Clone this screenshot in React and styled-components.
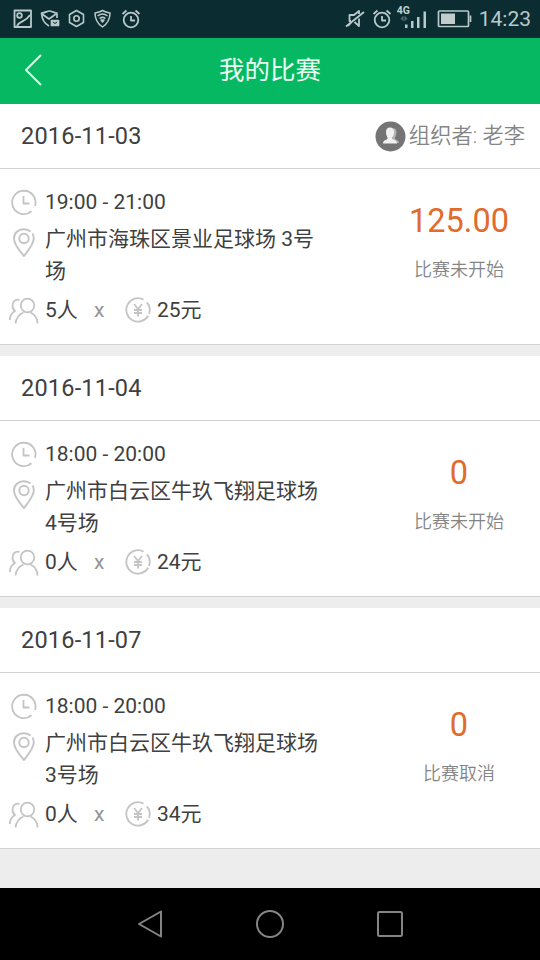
import React from 'react';
import styled, { createGlobalStyle } from 'styled-components';

const matches = [
  {
    date: '2016-11-03',
    organizer: '老李',
    time: '19:00 - 21:00',
    place: ['广州市海珠区景业足球场 3号', '场'],
    people: 5,
    price: 25,
    total: '125.00',
    status: '比赛未开始',
  },
  {
    date: '2016-11-04',
    time: '18:00 - 20:00',
    place: ['广州市白云区牛玖飞翔足球场', '4号场'],
    people: 0,
    price: 24,
    total: '0',
    status: '比赛未开始',
  },
  {
    date: '2016-11-07',
    time: '18:00 - 20:00',
    place: ['广州市白云区牛玖飞翔足球场', '3号场'],
    people: 0,
    price: 34,
    total: '0',
    status: '比赛取消',
  },
];

const App = () => (
  <>
    <GlobalStyle />
    <Screen>
      <StatusBar />
      <NavHeader>
        <BackButton aria-label="返回">
          <Icon width="18" height="32" viewBox="0 0 18 32" $stroke="#d5fbe4" $weight={2}>
            <path d="M17 1 L2 16 L17 31" />
          </Icon>
        </BackButton>
        <Title>我的比赛</Title>
      </NavHeader>
      <MatchList>
        {matches.map((match) => (
          <MatchCard key={match.date} match={match} />
        ))}
      </MatchList>
      <SystemNav />
    </Screen>
  </>
);

const MatchCard = ({ match }) => (
  <Card>
    <CardHeader>
      <MatchDate>{match.date}</MatchDate>
      {match.organizer && (
        <Organizer>
          <AvatarIcon />
          组织者: {match.organizer}
        </Organizer>
      )}
    </CardHeader>
    <CardBody>
      <Details>
        <DetailRow>
          <IconSlot><ClockIcon /></IconSlot>
          <span>{match.time}</span>
        </DetailRow>
        <PlaceRow>
          <PinSlot><PinIcon /></PinSlot>
          <Place>
            {match.place.map((line) => (
              <PlaceLine key={line}>{line}</PlaceLine>
            ))}
          </Place>
        </PlaceRow>
        <DetailRow>
          <IconSlot><PeopleIcon /></IconSlot>
          <People>{match.people}人</People>
          <Times>x</Times>
          <YenIcon />
          <Price>{match.price}元</Price>
        </DetailRow>
      </Details>
      <Summary>
        <Total>{match.total}</Total>
        <Status>{match.status}</Status>
      </Summary>
    </CardBody>
  </Card>
);

const StatusBar = () => (
  <StatusBarWrap>
    <StatusGroup $gap={7}>
      <Icon width="20" height="20" viewBox="0 0 20 20" $stroke="#b9c9ca" $weight={1.8}>
        <rect x="1.5" y="1.5" width="16.5" height="16.5" />
        <circle cx="6.5" cy="6.5" r="2.3" />
        <path d="M4 17 C7 11 12 14 17 6" />
      </Icon>
      <Icon width="20" height="20" viewBox="0 0 20 20" $stroke="#b9c9ca" $weight={1.7}>
        <path d="M17 9 V4 C13 4 12 2 9.500 2 C7 2 5 4 1.500 4 C2 11 5 15 9 17" />
        <path d="M2 5 L9 10 L16 5" />
        <rect x="11.500" y="11.500" width="7" height="5" fill="#b9c9ca" />
        <path d="M13 13 L15 14.500 L17 13" stroke="#0b2c31" strokeWidth="1" />
      </Icon>
      <Icon width="19" height="20" viewBox="0 0 19 20" $stroke="#b9c9ca" $weight={1.6}>
        <path d="M9.500 1.500 L16.500 5.500 V13.500 L9.500 17.500 L2.500 13.500 V5.500 Z" />
        <circle cx="9.500" cy="9.500" r="2.700" />
      </Icon>
      <Icon width="19" height="20" viewBox="0 0 19 20" $stroke="#b9c9ca" $weight={1.5}>
        <path d="M9.500 1.500 C12 3 14 3.500 17 4 C17 10 14 15 9.500 18 C5 15 2 10 2 4 C5 3.500 7 3 9.500 1.500 Z" />
        <path d="M4.500 7 C7.500 4.700 11.500 4.700 14.500 7 M6.500 9.500 C8.500 8 10.500 8 12.500 9.500" />
        <path d="M8 11 H11 L9.500 13 Z" fill="#b9c9ca" />
      </Icon>
      <AlarmOffset><AlarmIcon /></AlarmOffset>
    </StatusGroup>
    <StatusGroup $gap={7}>
      <Icon width="20" height="20" viewBox="0 0 20 20" $stroke="#b9c9ca" $weight={1.8}>
        <path d="M14 9.500 V17 L9.500 13 M14 5 V2 L9 6 H4.500 V12 H6" />
        <path d="M1 17.500 L19 3" />
        <path d="M6.500 13 L3 17" />
      </Icon>
      <AlarmIcon />
      <Signal>
        <NetworkType>4G</NetworkType>
        <svg width="29" height="26" viewBox="0 0 29 26" fill="#b9c9ca">
          <path d="M.5 12.500 L3.500 9.500 V15.500 Z M7.500 12.500 L4.500 9.500 V15.500 Z" fill="#536b70" />
          <path d="M5 18.500 H7.500 V22 H5 Z M11 15 H13.500 V22 H11 Z M17 11 H19.500 V22 H17 Z M23.500 5.500 H26 V22 H23.500 Z" />
        </svg>
      </Signal>
      <BatteryIcon />
      <Clock>14:23</Clock>
    </StatusGroup>
  </StatusBarWrap>
);

const SystemNav = () => (
  <SystemNavBar>
    <Icon width="26" height="30" viewBox="0 0 26 30" $stroke="#858585" $weight={2}>
      <path d="M2 15 L24 2.500 V27.500 Z" />
    </Icon>
    <Icon width="30" height="30" viewBox="0 0 30 30" $stroke="#858585" $weight={2}>
      <circle cx="15" cy="15" r="13" />
    </Icon>
    <Icon width="26" height="30" viewBox="0 0 26 30" $stroke="#858585" $weight={2}>
      <rect x="1" y="3" width="24" height="24" rx="1.500" />
    </Icon>
  </SystemNavBar>
);

const AlarmIcon = () => (
  <Icon width="20" height="20" viewBox="0 0 20 20" $stroke="#b9c9ca" $weight={1.8}>
    <circle cx="10" cy="11" r="7.300" />
    <path d="M10 7 V11.500 H14 M1.500 5 L5.500 1.500 M14.500 1.500 L18.500 5" />
  </Icon>
);

const BatteryIcon = () => (
  <Icon width="35" height="18" viewBox="0 0 35 18" $stroke="#b9c9ca" $weight={1.7}>
    <rect x="1.500" y="1" width="30" height="15.500" rx="1" />
    <path d="M33.500 5.500 V12" />
    <rect x="4" y="3.500" width="14" height="10.500" fill="#c3cccc" stroke="none" />
  </Icon>
);

const ClockIcon = () => (
  <Icon width="30" height="30" viewBox="0 0 30 30" $stroke="#c4c4c4" $weight={1.8}>
    <path d="M22.500 23.300 A11.700 11.700 0 1 1 26 18" />
    <path d="M14.500 8 V15.500 H20.500" />
  </Icon>
);

const PinIcon = () => (
  <Icon width="30" height="32" viewBox="0 0 30 32" $stroke="#c4c4c4" $weight={1.9}>
    <path d="M23.500 6.500 C25 9 25.300 12.500 23.500 16 C21.500 21 18 25 15 29 C11 24 5 18 5 11.500 C5 6 9.500 2.200 14.500 2.200 C17 2.200 19.500 3 21.500 4.500" />
    <circle cx="15" cy="11.500" r="4.700" />
  </Icon>
);

const PeopleIcon = () => (
  <Icon width="30" height="30" viewBox="0 0 30 30" $stroke="#c4c4c4" $weight={1.8}>
    <circle cx="18.500" cy="9.500" r="6.800" />
    <path d="M10.500 3.800 C6 3 3.500 6 3.500 9.500 C3.500 12 4.500 14 6 15 C2.500 17 .8 20 .8 24" />
    <path d="M6.500 27.500 C7 22 10 18.500 14.500 16.500 M21.500 16.500 C26 18.500 28.500 22 28.500 27.500" />
  </Icon>
);

const YenIcon = () => (
  <Icon width="28" height="28" viewBox="0 0 28 28" $stroke="#c4c4c4" $weight={1.8}>
    <path d="M19.500 3.600 A11.700 11.700 0 1 0 24.200 19.700 M25 18 C26.300 14 26 9.500 22.800 6.300" />
    <path d="M10 8 L14 13 L18 8 M14 13 V20.500 M10 14 H18 M10 17 H18" />
  </Icon>
);

const AvatarIcon = () => (
  <svg width="31" height="31" viewBox="0 0 31 31">
    <circle cx="15.500" cy="15.500" r="15" fill="#747474" />
    <path
      d="M18 7 C22 8 22 11 21 14 C20.500 16 19.500 17 20 18 C22 19 24 20 24 22 H18 Z"
      fill="#b4b4b4"
    />
    <path
      d="M15 6.500 C18 6.500 19.300 8.500 19 12 C18.800 14.500 17.500 15.500 17.300 17.500 C18 19 22 19 22 22.500 H8 C8 19 12 19 12.700 17.500 C12.500 15.500 11.200 14.500 11 12 C10.700 8.500 12 6.500 15 6.500 Z"
      fill="#f1f1f1"
    />
  </svg>
);

const GlobalStyle = createGlobalStyle`
  * {
    box-sizing: border-box;
  }

  body {
    margin: 0;
    background: #ededed;
    font-family: Roboto, 'Noto Sans CJK SC', sans-serif;
    font-weight: 400;
    color: #404040;
  }
`;

const Icon = styled.svg`
  display: block;
  flex-shrink: 0;
  fill: none;
  stroke: ${({ $stroke }) => $stroke};
  stroke-width: ${({ $weight }) => $weight}px;
  stroke-linejoin: round;
`;

const Screen = styled.div`
  display: flex;
  flex-direction: column;
  width: 540px;
  height: 960px;
  overflow: hidden;
  background: #ededed;
`;

const StatusBarWrap = styled.div`
  display: flex;
  align-items: center;
  justify-content: space-between;
  flex-shrink: 0;
  height: 38px;
  padding: 0 9px 0 13px;
  background: #0b2c31;
`;

const StatusGroup = styled.div`
  display: flex;
  align-items: center;
  gap: ${({ $gap }) => $gap}px;
`;

const AlarmOffset = styled.div`
  margin-left: 2px;
`;

const Signal = styled.div`
  position: relative;
  height: 26px;
  margin: 0 1px;
`;

const NetworkType = styled.span`
  position: absolute;
  top: -1px;
  left: -3px;
  font-size: 10.5px;
  line-height: 12px;
  font-weight: 700;
  color: #c3d0d1;
`;

const Clock = styled.span`
  font-size: 21px;
  line-height: 38px;
  color: #b9c9ca;
`;

const NavHeader = styled.header`
  display: grid;
  grid-template-columns: 64px 1fr 64px;
  align-items: center;
  flex-shrink: 0;
  height: 66px;
  padding-bottom: 2px;
  background: #06b862;
`;

const BackButton = styled.button`
  display: flex;
  padding: 0 0 0 24px;
  border: none;
  background: none;
`;

const Title = styled.h1`
  margin: 0;
  font-size: 25.5px;
  line-height: 64px;
  font-weight: 400;
  text-align: center;
  color: #e9fff2;
`;

const MatchList = styled.main`
  display: flex;
  flex: 1;
  flex-direction: column;
  gap: 11px;
`;

const Card = styled.section`
  background: #fff;
  border-bottom: 1px solid #d2d2d2;
`;

const CardHeader = styled.div`
  display: flex;
  align-items: center;
  justify-content: space-between;
  height: 65px;
  padding: 0 15px 0 21px;
  border-bottom: 1px solid #d2d2d2;
`;

const MatchDate = styled.span`
  font-size: 23.5px;
  line-height: 63px;
  letter-spacing: 0.2px;
`;

const Organizer = styled.div`
  display: flex;
  align-items: center;
  gap: 3px;
  font-size: 21.3px;
  line-height: 64px;
  font-weight: 350;
  color: #858585;
`;

const CardBody = styled.div`
  display: flex;
  height: 175px;
`;

const Details = styled.div`
  width: 378px;
  padding: 17px 0 0 9px;
`;

const DetailRow = styled.div`
  display: flex;
  align-items: center;
  height: 32px;
  font-size: 21px;
  line-height: 32px;
`;

const IconSlot = styled.div`
  width: 36px;
  padding-top: 2px;
`;

const PlaceRow = styled.div`
  display: flex;
  margin: 6px 0 7px;
`;

const PinSlot = styled.div`
  width: 36px;
  padding-top: 3px;
`;

const Place = styled.div`
  font-size: 21px;
  line-height: 31.5px;
`;

const PlaceLine = styled.div`
  white-space: nowrap;
`;

const People = styled.span`
  width: 49px;
`;

const Times = styled.span`
  width: 30px;
  color: #959595;
`;

const Price = styled.span`
  margin-left: 5px;
`;

const Summary = styled.div`
  display: flex;
  flex: 1;
  flex-direction: column;
  align-items: center;
  padding-top: 32px;
`;

const Total = styled.strong`
  font-size: 32.5px;
  line-height: 40px;
  font-weight: 400;
  color: #e06b2d;
`;

const Status = styled.span`
  margin-top: 15px;
  font-size: 18px;
  line-height: 28px;
  font-weight: 350;
  color: #858585;
`;

const SystemNavBar = styled.nav`
  display: flex;
  align-items: center;
  justify-content: center;
  gap: 92px;
  flex-shrink: 0;
  height: 72px;
  background: #000;
`;

export default App;
